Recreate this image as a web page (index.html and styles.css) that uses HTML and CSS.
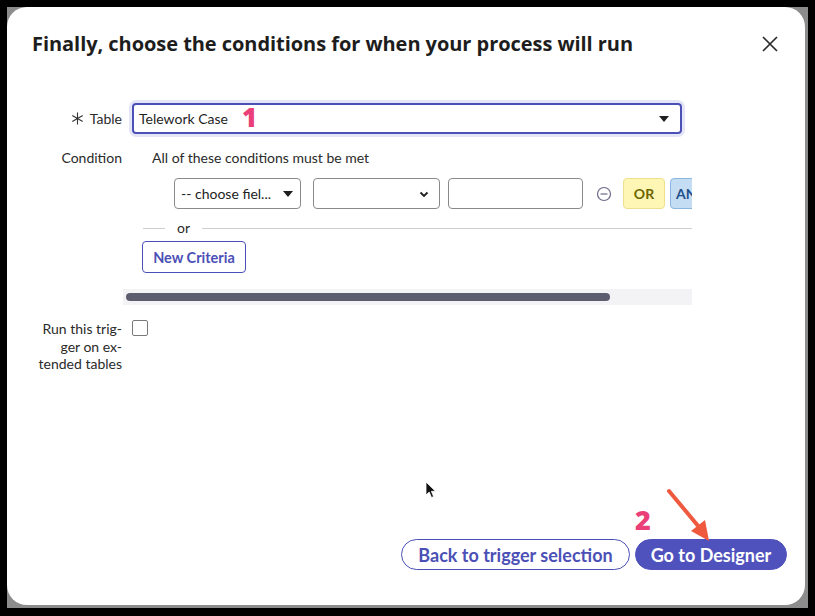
FILE: index.html
```html
<!DOCTYPE html>
<html>
<head>
<meta charset="utf-8">
<link rel="stylesheet" href="styles.css">
</head>
<body>
<div class="screen">
  <div class="backdrop">
    <div class="dialog">
      <div class="header">
        <h1 class="title">Finally, choose the conditions for when your process will run</h1>
        <button class="close" aria-label="Close">
          <svg width="18" height="18" viewBox="0 0 18 18"><path d="M2 2 L16 16 M16 2 L2 16" stroke="#2b2b2b" stroke-width="1.7" fill="none"/></svg>
        </button>
      </div>

      <div class="row table-row">
        <div class="label"><svg class="req" width="13" height="13" viewBox="0 0 13 13"><path d="M6.5 0.5 V12.5 M1.3 3.5 L11.7 9.5 M11.7 3.5 L1.3 9.5" stroke="#333" stroke-width="1.1" fill="none"/></svg>Table</div>
        <div class="table-select">
          <span class="tval">Telework Case</span>
          <span class="anno anno-1">1</span>
          <svg class="caret" width="10" height="6" viewBox="0 0 10 6"><path d="M0 0 H10 L5 6 Z" fill="#1f1f1f"/></svg>
        </div>
      </div>

      <div class="row cond-row">
        <div class="label">Condition</div>
        <div class="cond-text">All of these conditions must be met</div>
      </div>

      <div class="builder">
        <div class="fields">
          <div class="sel sel-1">-- choose fiel...
            <svg class="caret" width="10" height="6" viewBox="0 0 10 6"><path d="M0 0 H10 L5 6 Z" fill="#1f1f1f"/></svg>
          </div>
          <div class="sel sel-2">
            <svg class="chev" width="10" height="7" viewBox="0 0 10 7"><path d="M1.5 1.5 L5 5 L8.5 1.5" stroke="#1f1f1f" stroke-width="1.8" fill="none"/></svg>
          </div>
          <div class="inp"></div>
          <svg class="minus" width="16" height="16" viewBox="0 0 16 16"><circle cx="8" cy="8" r="6.5" stroke="#6b6b8a" stroke-width="1.2" fill="none"/><path d="M4.5 8 H11.5" stroke="#6b6b8a" stroke-width="1.2"/></svg>
          <button class="chip or">OR</button>
          <button class="chip and">AND</button>
        </div>
        <div class="divider"><span class="seg"></span><span class="or-t">or</span><span class="line"></span></div>
        <button class="newcrit">New Criteria</button>
        <div class="scroll"><div class="thumb"></div></div>
      </div>

      <div class="row ext-row">
        <div class="label ext-label">Run this trig-<br>ger on ex-<br>tended tables</div>
        <div class="checkbox"></div>
      </div>

      <div class="spacer"></div>

      <div class="footer">
        <button class="btn btn-outline">Back to trigger selection</button>
        <button class="btn btn-primary">Go to Designer</button>
        <span class="anno anno-2">2</span>
        <svg class="arrow" width="60" height="60" viewBox="0 0 60 60"><path d="M6 4 L36 40" stroke="#ef5a3f" stroke-width="4" stroke-linecap="round"/><path d="M28 44 L46 54 L42 33 Z" fill="#ef5a3f"/></svg>
      </div>

      <svg class="cursor" width="12" height="18" viewBox="0 0 12 18"><path d="M1 1 L1 14 L4.2 11 L6.5 16.5 L8.6 15.6 L6.4 10.3 L10.5 10.3 Z" fill="#111" stroke="#fff" stroke-width="0.8"/></svg>
    </div>
  </div>
</div>
</body>
</html>
```

FILE: styles.css
```css
* { box-sizing: border-box; }
html, body { margin: 0; padding: 0; }
body {
  width: 815px;
  height: 616px;
  background: #000;
  font-family: "Lato", "Liberation Sans", sans-serif;
  color: #1f1f1f;
  overflow: hidden;
}
.screen {
  padding: 7px 7px 8px 7px;
  height: 616px;
}
.backdrop {
  background: #8c8c8c;
  height: 601px;
  padding: 0 3px 3px 0;
}
.dialog {
  position: relative;
  background: #fff;
  border-radius: 20px;
  height: 598px;
  display: flex;
  flex-direction: column;
}
.header {
  display: flex;
  align-items: center;
  justify-content: space-between;
  padding: 24px 26px 0 25px;
  height: 50px;
}
.title {
  margin: 0;
  font-family: "Open Sans", sans-serif;
  font-weight: 700;
  font-size: 20px;
  letter-spacing: -0.05px;
  color: #1d1d1d;
  line-height: 26px;
}
.close {
  border: 0;
  background: none;
  padding: 0;
  width: 18px;
  height: 18px;
  display: block;
}
.close svg { display: block; }

.row { display: flex; }
.label {
  width: 125px;
  padding-right: 10px;
  text-align: right;
  font-size: 14px;
  color: #2a2a2a;
  flex: none;
}
.req { margin-right: 6px; vertical-align: -1px; }

.table-row { margin-top: 46px; align-items: center; }
.table-select {
  position: relative;
  width: 550px;
  height: 31px;
  border: 2px solid #4b50b6;
  border-radius: 4px;
  box-shadow: 0 0 0 3px #e4e6f7;
  display: flex;
  align-items: center;
  padding-left: 5px;
  font-size: 14px;
}
.tval { color: #1f1f1f; }
.table-select .caret { position: absolute; right: 11px; top: 11px; }
.anno {
  font-family: "Open Sans", sans-serif;
  font-weight: 800;
  color: #ea3f79;
}
.anno-1 { font-size: 26px; margin-left: 14px; line-height: 1; margin-top: -3px; }

.cond-row { margin-top: 15px; font-size: 14px; line-height: 17px; }
.cond-text { padding-left: 20px; color: #2a2a2a; }

.builder {
  margin-left: 116px;
  width: 569px;
  overflow: hidden;
  margin-top: 12px;
}
.fields {
  display: flex;
  align-items: center;
  padding-left: 51px;
  height: 31px;
  white-space: nowrap;
}
.sel, .inp {
  position: relative;
  height: 31px;
  border: 1px solid #8a8a8a;
  border-radius: 4px;
  font-size: 14px;
  display: flex;
  align-items: center;
  flex: none;
}
.sel-1 { width: 127px; padding-left: 6px; color: #222; }
.sel-1 .caret { position: absolute; right: 7px; top: 12px; }
.sel-2 { width: 127px; margin-left: 12px; }
.sel-2 .chev { position: absolute; right: 10px; top: 12px; }
.inp { width: 135px; margin-left: 8px; }
.minus { margin-left: 13px; flex: none; }
.chip {
  font-family: "Lato", sans-serif;
  font-weight: 700;
  font-size: 14px;
  height: 31px;
  border-radius: 4px;
  flex: none;
  padding: 0;
}
.or {
  margin-left: 11px;
  width: 42px;
  background: #fdf6b5;
  border: 1px solid #efe08e;
  color: #6f6500;
}
.and {
  margin-left: 5px;
  width: 50px;
  background: #c4ddf3;
  border: 1px solid #8ab6df;
  color: #1f4f8a;
  text-align: left;
  padding-left: 5px;
}

.divider {
  display: flex;
  align-items: center;
  margin-top: 10px;
  height: 18px;
  padding-left: 20px;
}
.divider .seg { width: 22px; border-top: 1px solid #cfcfcf; }
.or-t { font-size: 14px; padding: 0 12px; color: #2a2a2a; line-height: 14px; }
.divider .line { flex: 1; border-top: 1px solid #cfcfcf; }

.newcrit {
  display: block;
  margin: 4px 0 0 19px;
  height: 32px;
  width: 104px;
  border: 1px solid #4b50b6;
  border-radius: 4px;
  background: #fff;
  color: #4b50b6;
  font-family: "Lato", sans-serif;
  font-weight: 700;
  font-size: 14.5px;
  padding: 0;
}
.scroll {
  margin-top: 16px;
  height: 16px;
  background: #f3f3f5;
  padding: 4px 3px;
}
.thumb {
  width: 484px;
  height: 8px;
  border-radius: 4px;
  background: #5e5d6f;
}

.ext-row { margin-top: 15px; }
.ext-label { line-height: 17.5px; }
.checkbox {
  width: 16px;
  height: 16px;
  border: 1px solid #7a7a7a;
  border-radius: 2px;
  margin-top: 0;
}

.spacer { flex: 1; }

.footer {
  position: relative;
  display: flex;
  justify-content: flex-end;
  gap: 5px;
  padding: 0 18px 35px 0;
}
.btn {
  height: 31px;
  border-radius: 16px;
  font-family: "Lato", sans-serif;
  font-weight: 700;
  font-size: 18px;
  letter-spacing: 0;
  padding: 0;
}
.btn-outline {
  width: 229px;
  background: #fff;
  border: 1px solid #4b50b6;
  color: #4b50b6;
}
.btn-primary {
  width: 152px;
  background: #4f52bd;
  border: 1px solid #4f52bd;
  color: #fff;
}
.anno-2 {
  position: absolute;
  left: 628px;
  top: -33px;
  font-size: 27px;
  line-height: 1;
}
.arrow {
  position: absolute;
  left: 656px;
  top: -52px;
}
.cursor {
  position: absolute;
  left: 418px;
  top: 474px;
}
```
